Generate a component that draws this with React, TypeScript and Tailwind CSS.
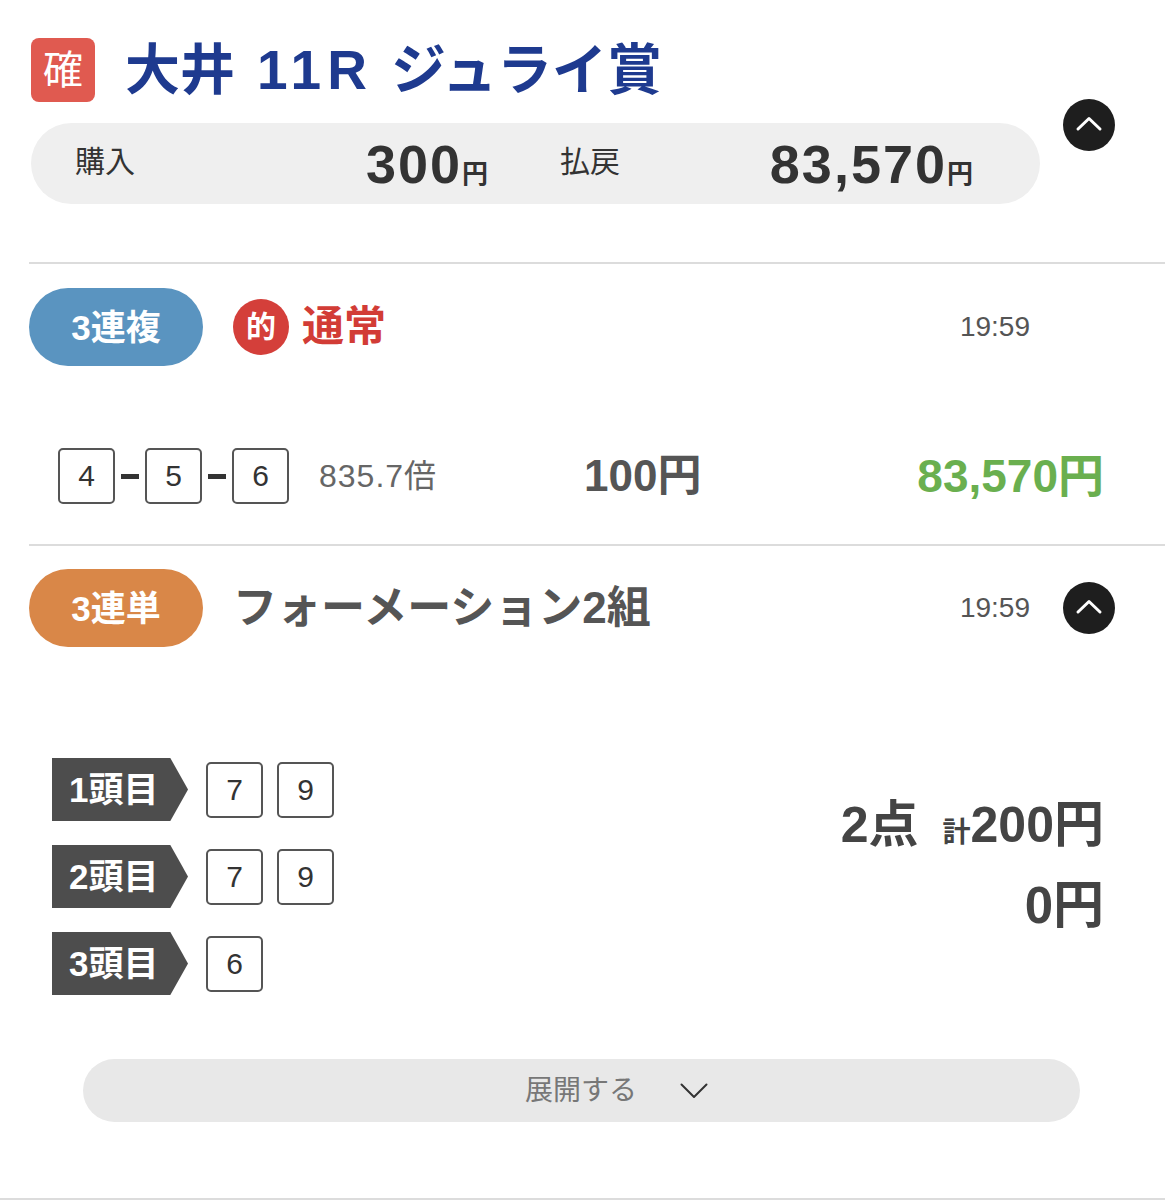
import React from "react";

function ChevronCircle() {
  return (
    <div className="flex h-[52px] w-[52px] items-center justify-center rounded-full bg-[#1e1e1e]">
      <svg width="52" height="52" viewBox="0 0 52 52" fill="none">
        <polyline points="15,30 26,19.5 37,30" stroke="#fff" strokeWidth="3" strokeLinecap="round" strokeLinejoin="round" />
      </svg>
    </div>
  );
}

function NumBox({ n }: { n: string }) {
  return (
    <div className="flex h-[56px] w-[57px] items-center justify-center rounded-[5px] border-2 border-[#555] text-[30px] leading-none text-[#333]">
      {n}
    </div>
  );
}

function Tag({ label }: { label: string }) {
  return (
    <div className="flex h-[63px] w-[136px] items-center bg-[#4d4d4d] pl-[17px] text-[35px] font-bold leading-none text-white [clip-path:polygon(0_0,87%_0,100%_50%,87%_100%,0_100%)]">
      {label}
    </div>
  );
}

function FormationRow({ label, nums }: { label: string; nums: string[] }) {
  return (
    <div className="flex h-[63px] items-center">
      <Tag label={label} />
      <div className="ml-[18px] flex gap-[14px]">
        {nums.map((n, i) => (
          <NumBox key={i} n={n} />
        ))}
      </div>
    </div>
  );
}

export default function App() {
  return (
    <div className="w-[1165px] bg-white font-['Liberation_Sans','Noto_Sans_CJK_JP',sans-serif] text-[#333]">
      {/* Header */}
      <div className="flex pl-[31px] pt-[38px]">
        <div className="flex flex-col">
          <div className="flex h-[64px] items-center">
            <div className="flex h-[64px] w-[64px] items-center justify-center rounded-[8px] bg-[#e05a50] text-[40px] leading-none text-white">
              確
            </div>
            <div className="ml-[30px] flex items-center whitespace-nowrap text-[55px] font-bold leading-none text-[#1e3a8f]">
              <span>大井</span>
              <span className="ml-[22px] tracking-[6px]">11R</span>
              <span className="ml-[18px]">ジュライ賞</span>
            </div>
          </div>
          <div className="mt-[21px] flex h-[81px] w-[1009px] items-center rounded-full bg-[#efefef] pl-[44px]">
            <div className="flex w-[413px] items-center justify-between">
              <span className="mt-[-4px] text-[30px] leading-none text-[#333]">購入</span>
              <span className="font-bold leading-none text-[#333]">
                <span className="text-[54px] tracking-[2px]">300</span>
                <span className="text-[26px]">円</span>
              </span>
            </div>
            <div className="ml-[72px] flex w-[413px] items-center justify-between">
              <span className="mt-[-4px] text-[30px] leading-none text-[#333]">払戻</span>
              <span className="font-bold leading-none text-[#333]">
                <span className="text-[54px] tracking-[2px]">83,570</span>
                <span className="text-[26px]">円</span>
              </span>
            </div>
          </div>
        </div>
        <div className="ml-[23px] mt-[61px]">
          <ChevronCircle />
        </div>
      </div>

      <div className="ml-[29px] mt-[58px] h-[2px] bg-[#dcdcdc]" />

      {/* Section 1 */}
      <div className="pt-[24px]">
        <div className="flex h-[78px] items-center pl-[29px] pr-[50px]">
          <div className="flex h-[78px] w-[174px] items-center justify-center rounded-full bg-[#5a94c0] text-[35px] font-bold leading-none text-white">
            3連複
          </div>
          <div className="ml-[30px] flex h-[56px] w-[56px] items-center justify-center rounded-full bg-[#d43f3a] text-[30px] font-bold leading-none text-white">
            的
          </div>
          <div className="ml-[13px] text-[42px] font-bold leading-none text-[#d23c36]">通常</div>
          <div className="flex-1" />
          <div className="text-[28px] leading-none text-[#555]">19:59</div>
          <div className="ml-[33px] h-[52px] w-[52px]" />
        </div>
        <div className="mt-[82px] flex h-[56px] items-center pl-[58px] pr-[61px]">
          <NumBox n="4" />
          <div className="mx-[6px] h-[5px] w-[18px] bg-[#333]" />
          <NumBox n="5" />
          <div className="mx-[6px] h-[5px] w-[18px] bg-[#333]" />
          <NumBox n="6" />
          <div className="ml-[30px] w-[265px] text-[32px] leading-none tracking-[1px] text-[#666]">835.7倍</div>
          <div className="text-[44px] font-semibold leading-none text-[#555]">100円</div>
          <div className="flex-1" />
          <div className="text-[46px] font-semibold leading-none text-[#6aaf4f]">83,570円</div>
        </div>
      </div>

      <div className="ml-[29px] mt-[40px] h-[2px] bg-[#dcdcdc]" />

      {/* Section 2 */}
      <div className="pt-[23px]">
        <div className="flex h-[78px] items-center pl-[29px] pr-[50px]">
          <div className="flex h-[78px] w-[174px] items-center justify-center rounded-full bg-[#d98748] text-[35px] font-bold leading-none text-white">
            3連単
          </div>
          <div className="ml-[30px] text-[44px] font-bold leading-none text-[#555]">フォーメーション2組</div>
          <div className="flex-1" />
          <div className="text-[28px] leading-none text-[#555]">19:59</div>
          <div className="ml-[33px]">
            <ChevronCircle />
          </div>
        </div>

        <div className="mt-[111px] flex pl-[52px] pr-[61px]">
          <div className="flex flex-col gap-[24px]">
            <FormationRow label="1頭目" nums={["7", "9"]} />
            <FormationRow label="2頭目" nums={["7", "9"]} />
            <FormationRow label="3頭目" nums={["6"]} />
          </div>
          <div className="ml-auto flex flex-col items-end pt-[42px] text-[#444]">
            <div className="flex h-[60px] items-baseline font-semibold leading-none">
              <span className="text-[50px]">2点</span>
              <span className="ml-[24px] text-[28px]">計</span>
              <span className="text-[50px]">200円</span>
            </div>
            <div className="mt-[20px] flex h-[60px] items-baseline font-semibold leading-none">
              <span className="text-[51px]">0円</span>
            </div>
          </div>
        </div>

        <div className="ml-[83px] mt-[64px] flex h-[63px] w-[997px] items-center justify-center rounded-full bg-[#e8e8e8] pl-[70px]">
          <span className="text-[28px] leading-none text-[#777]">展開する</span>
          <svg className="ml-[43px]" width="28" height="16" viewBox="0 0 28 16" fill="none">
            <polyline points="1.5,1.5 14,14 26.5,1.5" stroke="#333" strokeWidth="2" strokeLinecap="round" strokeLinejoin="round" />
          </svg>
        </div>
      </div>

      <div className="mt-[76px] h-[2px] bg-[#dcdcdc]" />
    </div>
  );
}
